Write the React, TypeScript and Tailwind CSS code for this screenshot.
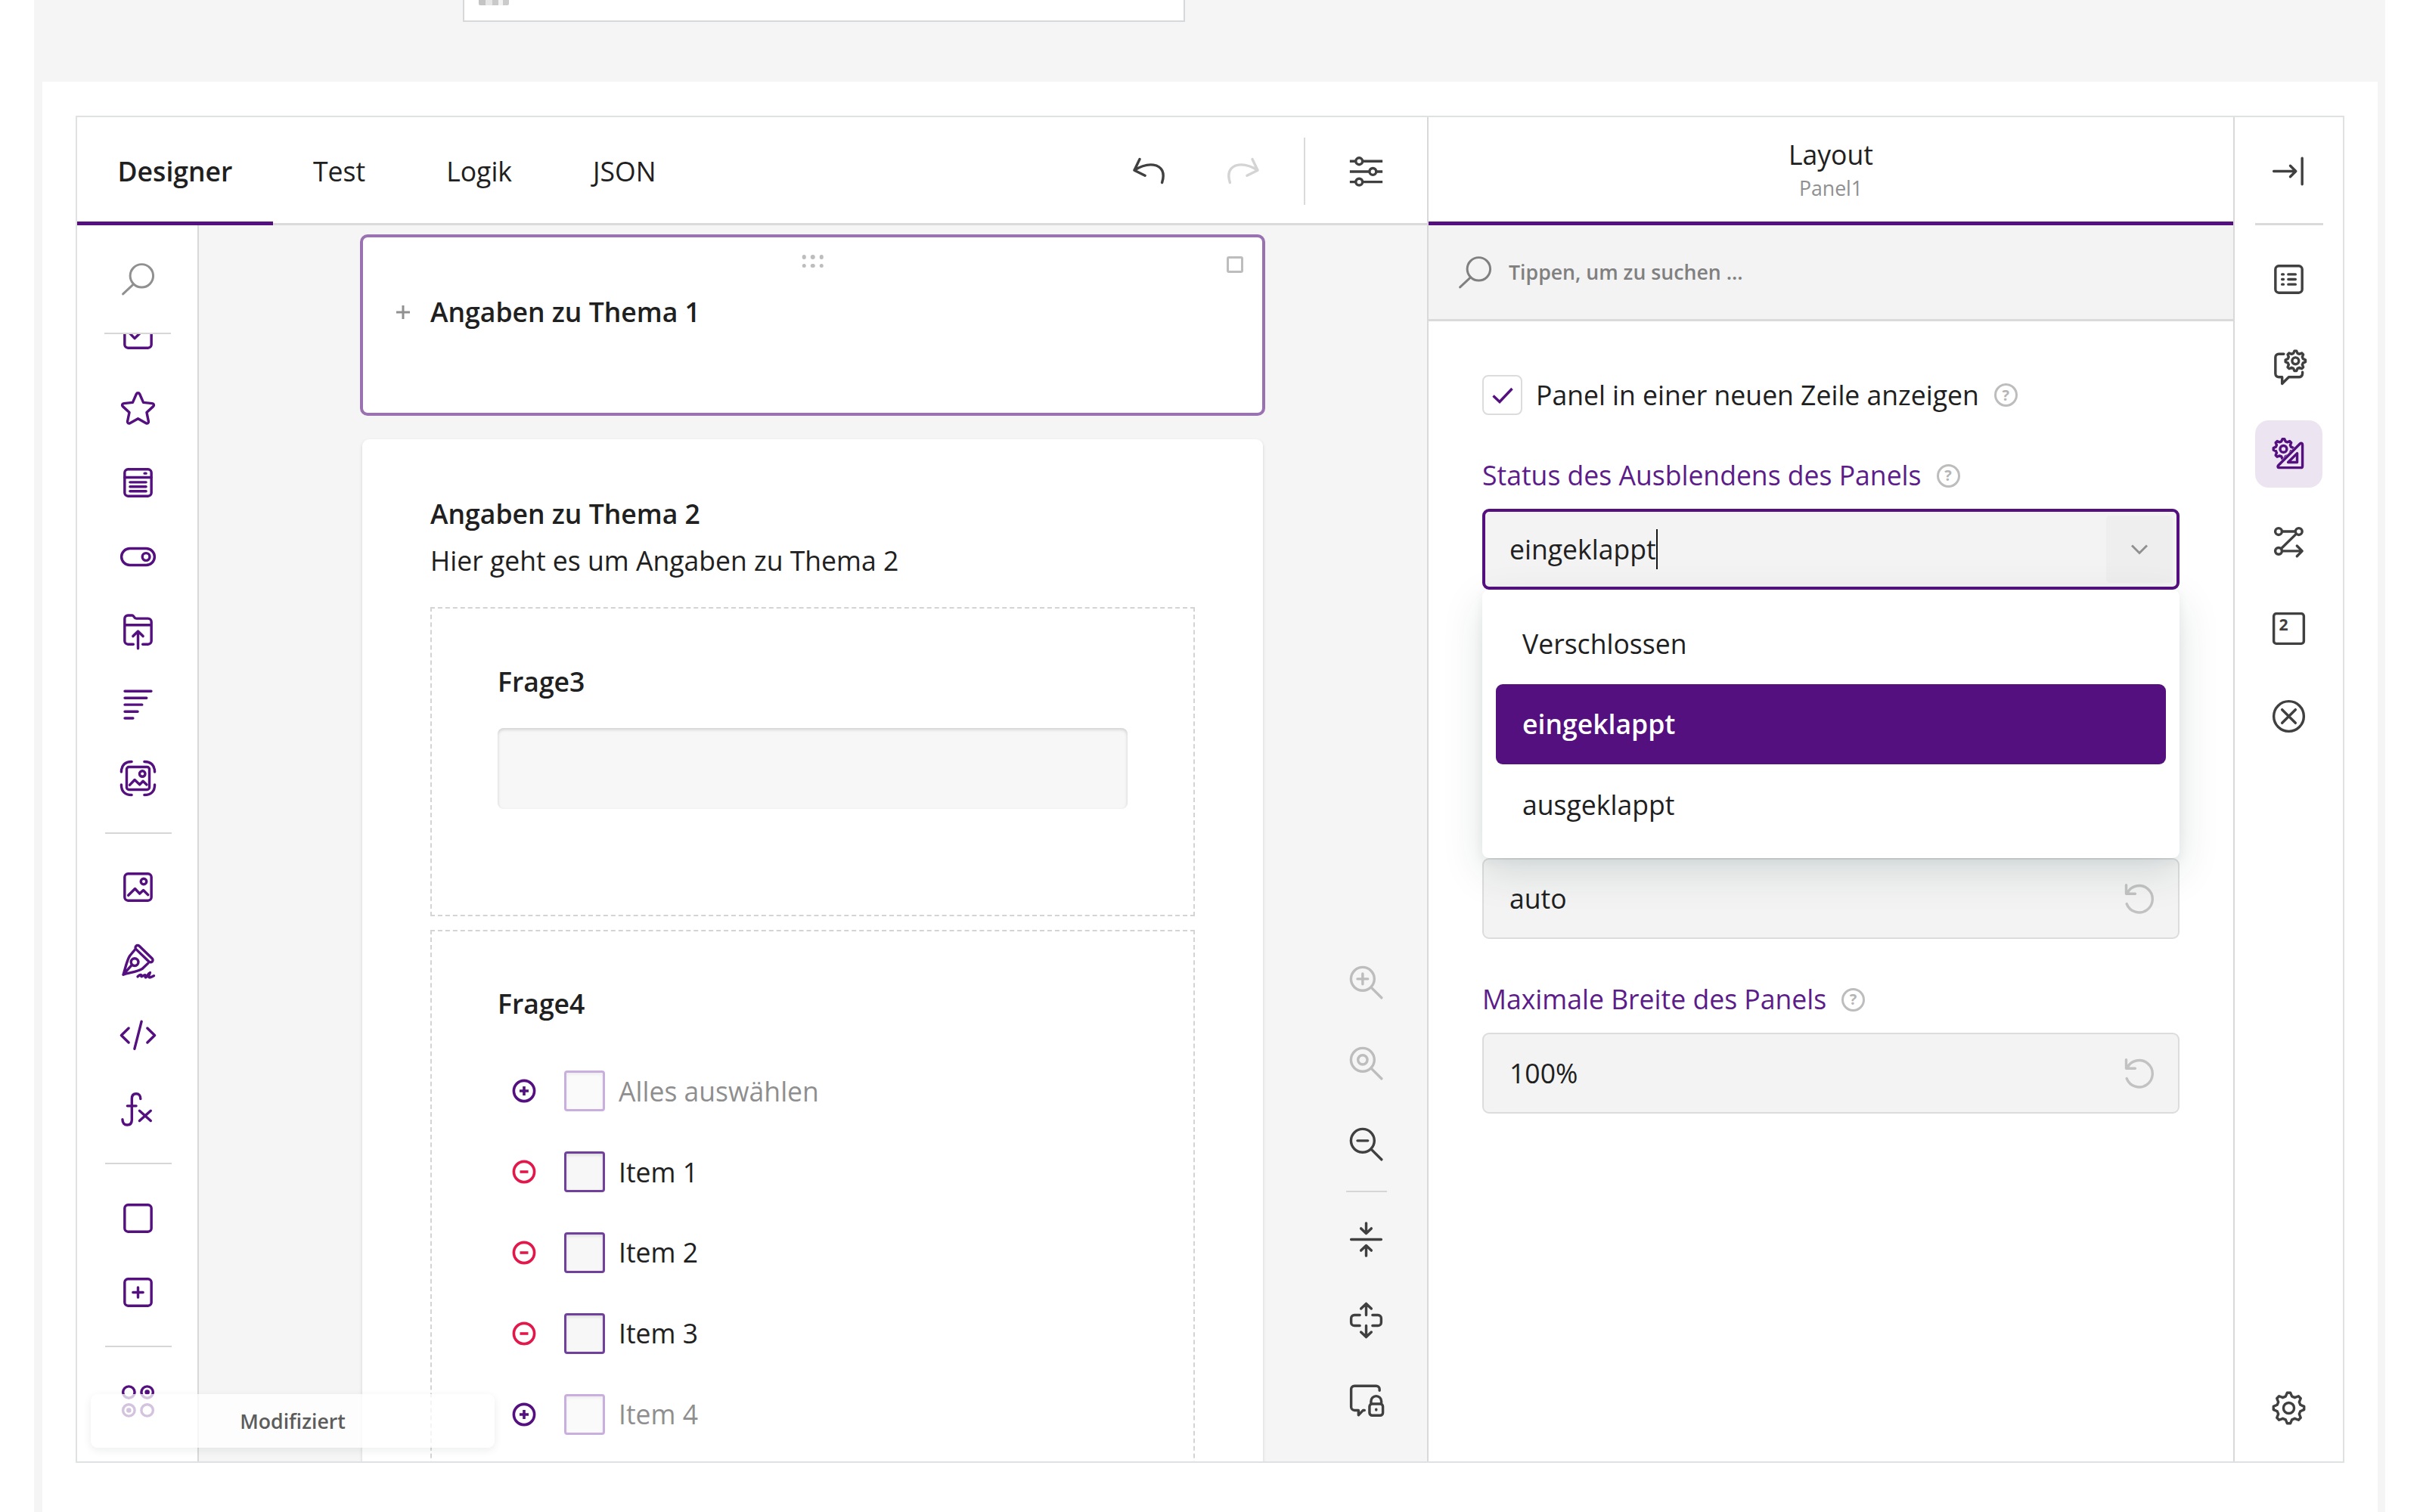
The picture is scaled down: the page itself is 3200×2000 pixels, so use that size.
import type { ReactNode } from "react";
import clsx from "clsx";

type IconProps = { children: ReactNode; className?: string };

function Icon({ children, className }: IconProps) {
  return (
    <svg
      viewBox="0 0 24 24"
      className={clsx("w-[53px] h-[53px] shrink-0 overflow-visible", className)}
      fill="none"
      stroke="currentColor"
      strokeWidth="1.55"
      strokeLinecap="round"
      strokeLinejoin="round"
    >
      {children}
    </svg>
  );
}

// Cog outline with eight small teeth
function cog(cx: number, cy: number, outer: number, inner: number) {
  const points: string[] = [];
  const offsets = [-0.34, -0.13, 0.13, 0.34];
  for (let i = 0; i < 8; i++) {
    offsets.forEach((offset, k) => {
      const radius = k === 1 || k === 2 ? outer : inner;
      const angle = ((i + offset) * Math.PI) / 4 - Math.PI / 2;
      points.push(`${(cx + radius * Math.cos(angle)).toFixed(2)} ${(cy + radius * Math.sin(angle)).toFixed(2)}`);
    });
  }
  return `M${points.join("L")}Z`;
}

const searchIcon = (
  <>
    <circle cx="14.2" cy="9.9" r="6.9" />
    <path d="M9.3 14.9L3 20.8" />
  </>
);

const choiceTools = [
  <><rect x="4" y="4" width="16" height="16" rx="2" /><path d="M7.2 11.4L10 14.3L15.8 8.6" /></>,
  <path d="M12 2.6C12.5 2.6 12.8 2.9 13 3.3L15.2 8.3L20.5 8.9C21.5 9 21.8 10 21.1 10.7L17.2 14.3L18.3 19.6C18.5 20.6 17.7 21.2 16.8 20.7L12 18L7.2 20.7C6.3 21.2 5.5 20.6 5.7 19.6L6.8 14.3L2.9 10.7C2.2 10 2.5 9 3.5 8.9L8.8 8.3L11 3.3C11.2 2.9 11.5 2.6 12 2.6Z" />,
  <><rect x="4" y="4" width="16" height="16" rx="2" /><path d="M4 8.8H20M15.9 6.4H16.8M7.2 11.7H16.8M7.2 14.4H16.8M7.2 17.1H16.8" /></>,
  <><rect x="2.1" y="7" width="19.8" height="10" rx="5" /><circle cx="16.8" cy="12" r="2.2" /></>,
  <><path d="M9.2 20H6A2 2 0 0 1 4 18V4.7A2 2 0 0 1 6 2.7H8.6C9.6 2.7 9.6 4.6 11 4.6H18A2 2 0 0 1 20 6.6V18A2 2 0 0 1 18 20H14.8M4 8.5H20" /><path d="M12 22.5V12.2M9 15.2L12 12.2L15 15.2" /></>,
  <path d="M4.1 4.2H19.9M4.1 8.3H17.1M4.1 12.3H14.4M4.1 16.4H11.8M4.1 20.4H9" />,
  <>
    <path d="M2 8.2C2 4.2 4.2 2 8.2 2M15.8 2C19.8 2 22 4.2 22 8.2M22 15.8C22 19.8 19.8 22 15.8 22M8.2 22C4.2 22 2 19.8 2 15.8" />
    <rect x="5.2" y="5.2" width="13.6" height="13.6" rx="1.4" />
    <circle cx="14.6" cy="9.3" r="1.7" />
    <path d="M7 16L10 12.9L13 15.8L15 13.7L17.2 15.8" />
  </>,
];

const contentTools = [
  <><rect x="4" y="4" width="16" height="16" rx="2" /><circle cx="15.4" cy="8.6" r="1.7" /><path d="M6.2 16.9L10.2 12.9L13 15.9L15.2 13.8L18 16.6" /></>,
  <>
    <rect x="8.9" y="6.2" width="13.4" height="2.7" rx="1.35" transform="rotate(44 15.6 7.6)" />
    <path d="M10.1 5.1L7.2 8.6C5.4 11 4.5 16 3.2 20C7 18.8 12 18.2 14.4 16.6L17.9 13.3M3.2 20L8.4 14.1" />
    <circle cx="10" cy="12.5" r="2.2" />
    <path d="M11.8 21.2C13.2 19.9 14.2 19.7 13.9 21C14 21.7 15.8 20 16.4 20.3C16.8 20.6 16 21.6 16.6 21.7C17.4 21.5 17.9 19.2 19.2 18.8C18.8 20 17.9 21.6 18.9 21.7C19.8 21.7 20.6 21.1 21.5 20.7" />
  </>,
  <path d="M6.4 7.7L2 12L6.4 16.3M17.6 7.7L22 12L17.6 16.3M14.1 3.7L9.9 20.1" />,
  <path d="M13.5 5.7C13.5 3.7 12.6 2.6 10.9 2.6C9.2 2.6 8.3 3.8 8.3 5.6V18.2C8.3 20.1 7.3 21.3 5.5 21.3C3.7 21.3 2.7 20 2.7 18M5.6 9.9H10.9M12.9 12.8L19.6 18.8M19.6 12.8L12.9 18.8" />,
];

const panelTools = [
  <rect x="4" y="4" width="16" height="16" rx="2" />,
  <><rect x="4" y="4" width="16" height="16" rx="2" /><path d="M12 9V15M9 12H15" /></>,
];

const matrixTool = (
  <>
    <circle cx="6.5" cy="6.6" r="3.5" />
    <circle cx="17.5" cy="6.6" r="3.5" />
    <circle cx="6.5" cy="17.4" r="3.5" />
    <circle cx="17.5" cy="17.4" r="3.5" />
    <circle cx="17.5" cy="6.6" r="0.7" fill="currentColor" />
    <circle cx="6.5" cy="17.4" r="0.7" fill="currentColor" />
  </>
);

const lens = (
  <>
    <circle cx="9.9" cy="9.9" r="7" />
    <path d="M15 15L21.2 21.2" />
  </>
);

const zoomTools = [
  { faded: true, icon: <>{lens}<path d="M9.9 6.8V13M6.8 9.9H13" /></> },
  { faded: true, icon: <>{lens}<circle cx="9.9" cy="9.9" r="2.8" /></> },
  { faded: false, icon: <>{lens}<path d="M6.8 9.9H13" /></> },
];

const viewTools = [
  <path d="M3 12H21M12 2.2V8.4M8.9 5.4L12 8.4L15.1 5.4M12 21.8V15.6M8.9 18.6L12 15.6L15.1 18.6" />,
  <path d="M12 8.8V2M8.9 5L12 2L15.1 5M12 15.2V22M8.9 19L12 22L15.1 19M8.2 8.8H5A2 2 0 0 0 3 10.8V13.2A2 2 0 0 0 5 15.2H8.2M15.8 8.8H19A2 2 0 0 1 21 10.8V13.2A2 2 0 0 1 19 15.2H15.8" />,
  <>
    <path d="M20 5.6V4.8A2 2 0 0 0 18 2.8H5A2 2 0 0 0 3 4.8V15.4A2 2 0 0 0 5 17.4H7.4V20.3L10.2 17.4H11" />
    <rect x="14" y="13.6" width="8" height="6.9" rx="1.6" />
    <path d="M14.9 13.4V12A3.1 3.1 0 0 1 21.1 12V13.4M18 16.8V17.2" />
  </>,
];

const railTools = [
  { active: false, icon: <><rect x="4" y="4" width="16" height="16" rx="2" /><path d="M8 9H8.8M8 12H8.8M8 15H8.8M11.7 9H16M11.7 12H16M11.7 15H16" /></> },
  {
    active: false,
    icon: (
      <>
        <path d="M9 4.2H6A2 2 0 0 0 4 6.2V16A2 2 0 0 0 6 18H8V22L12 18H18A2 2 0 0 0 20.2 16V15" />
        <path d={cog(16, 8.3, 6, 4.7)} />
        <circle cx="16" cy="8.3" r="2" />
      </>
    ),
  },
  {
    active: true,
    icon: (
      <>
        <path d={cog(8.8, 9, 6, 4.7)} />
        <circle cx="8.8" cy="9" r="2" />
        <path d="M5.9 20.2L20 6.1V20.2Z" fill="#ede4f2" stroke="#ede4f2" strokeWidth="4" />
        <path d="M6.2 20.2C5.4 20.2 5.2 19.4 5.7 18.9L18.8 5.8C19.4 5.2 20.2 5.6 20.2 6.4V19.2A1 1 0 0 1 19.2 20.2Z" />
        <path d="M11.6 17L17 11.6V17Z" />
      </>
    ),
  },
  {
    active: false,
    icon: (
      <>
        <circle cx="5.9" cy="5.9" r="2" />
        <circle cx="18" cy="5.9" r="2" />
        <circle cx="5.9" cy="17.6" r="2" />
        <path d="M7.9 5.9H16M16.5 7.3L7.4 16.2M7.9 17.6H20M16.9 14.5L20 17.6L16.9 20.7" />
      </>
    ),
  },
  {
    active: false,
    icon: (
      <>
        <rect x="3" y="3" width="18" height="18" rx="1.5" />
        <text x="6.1" y="13" fontSize="9.6" fontWeight="700" fill="currentColor" stroke="none">2</text>
      </>
    ),
  },
  { active: false, icon: <><circle cx="12" cy="12" r="9" /><path d="M8 8L16 16M16 8L8 16" /></> },
];

const items = [
  { label: "Alles auswählen", added: false },
  { label: "Item 1", added: true },
  { label: "Item 2", added: true },
  { label: "Item 3", added: true },
  { label: "Item 4", added: false },
];

const options = ["Verschlossen", "eingeklappt", "ausgeklappt"];

function ToolGroup({ tools }: { tools: ReactNode[] }) {
  return (
    <>
      {tools.map((tool, i) => (
        <div key={i} className="h-[97.8px] shrink-0 flex items-center justify-center">
          <Icon>{tool}</Icon>
        </div>
      ))}
    </>
  );
}

function ToolSeparator() {
  return (
    <div className="h-[46.3px] shrink-0 flex items-center justify-center">
      <div className="w-[88px] h-[2px] bg-[#d6d6d6]" />
    </div>
  );
}

function Help() {
  return (
    <span className="w-[31px] h-[31px] rounded-full border-[3px] border-[#bdbdbd] text-[#b5b5b5] text-[20px] leading-none font-bold flex items-center justify-center shrink-0">
      ?
    </span>
  );
}

function Toolbox() {
  return (
    <div className="w-[161px] shrink-0 flex flex-col bg-white border-r-2 border-[#d9d9d9] text-[#54107f]">
      <div className="w-[88px] h-[144px] ml-[36px] shrink-0 flex items-center justify-center border-b-2 border-[#d6d6d6] text-[#909090]">
        <Icon className="stroke-[1.35]">{searchIcon}</Icon>
      </div>
      <div className="flex-1 min-h-0 overflow-hidden">
        <div className="-mt-[48px] pl-[2px] flex flex-col">
          <ToolGroup tools={choiceTools} />
          <ToolSeparator />
          <ToolGroup tools={contentTools} />
          <ToolSeparator />
          <ToolGroup tools={panelTools} />
          <ToolSeparator />
          <ToolGroup tools={[matrixTool]} />
        </div>
      </div>
    </div>
  );
}

function Canvas() {
  return (
    <div className="flex-1 min-w-0 flex bg-[#f5f5f5] pl-[213px] overflow-hidden">
      <div className="w-[1197px] shrink-0 pt-3 flex flex-col">
        {/* Selected, collapsed panel */}
        <div className="h-[240px] shrink-0 rounded-[10px] border-[4.5px] border-[#9a72b1] bg-white relative pl-[44px] pt-[75px]">
          <div className="absolute top-[23px] left-1/2 -translate-x-1/2 grid grid-cols-3 gap-x-[6px] gap-y-[6px]">
            {[0, 1, 2, 3, 4, 5].map((dot) => (
              <span key={dot} className="w-[5.5px] h-[5.5px] rounded-full bg-[#bdbdbd]" />
            ))}
          </div>
          <div className="absolute top-[25px] right-[25px] w-[22px] h-[22px] rounded-[3px] border-[3px] border-[#bdbdbd]" />
          <div className="flex items-center h-[48px]">
            <svg viewBox="0 0 18 18" className="w-[18px] h-[18px] mr-[27px]" stroke="#909090" strokeWidth="3">
              <path d="M9 0V18M0 9H18" />
            </svg>
            <span className="font-semibold">Angaben zu Thema 1</span>
          </div>
        </div>

        <div className="mt-[31px] mx-[3px] h-[1500px] shrink-0 rounded-[9px] bg-white shadow-[0_2px_4px_rgba(0,0,0,0.15)] px-[90px] pt-[74px]">
          <div className="h-[48px] leading-[48px] font-semibold">Angaben zu Thema 2</div>
          <div className="mt-[14px] h-[48px] leading-[48px]">Hier geht es um Angaben zu Thema 2</div>

          <div className="mt-[38px] h-[409px] border-[2.5px] border-dashed border-[#d4d4d4] px-[87px] pt-[72px]">
            <div className="h-[48px] leading-[48px] font-semibold">Frage3</div>
            <div className="mt-[38px] h-[107px] rounded-[8px] bg-[#f7f7f7] shadow-[inset_0_2px_4px_rgba(0,0,0,0.17)]" />
          </div>

          <div className="mt-[18px] h-[1000px] border-[2.5px] border-dashed border-[#d4d4d4] px-[87px] pt-[71px]">
            <div className="h-[48px] leading-[48px] font-semibold">Frage4</div>
            <div className="mt-[39px]">
              {items.map((item) => (
                <div key={item.label} className="h-[106.8px] flex items-center pl-[19px]">
                  <svg
                    viewBox="0 0 32 32"
                    className={clsx("w-[32px] h-[32px]", item.added ? "text-[#e2174a]" : "text-[#54107f]")}
                    fill="none"
                    stroke="currentColor"
                    strokeWidth="3.6"
                  >
                    <circle cx="16" cy="16" r="13.6" />
                    <path d={item.added ? "M10.5 16H21.5" : "M10 16H22M16 10V22"} />
                  </svg>
                  <div className={clsx("flex items-center ml-[37px]", !item.added && "opacity-50")}>
                    <span
                      className={clsx(
                        "w-[54px] h-[54px] rounded-[4px] border-[3px] bg-[#f7f7f7] shadow-[inset_0_2px_4px_rgba(0,0,0,0.12)]",
                        item.added ? "border-[#70409a]" : "border-[#9462bd]",
                      )}
                    />
                    <span className="ml-[18px]">{item.label}</span>
                  </div>
                </div>
              ))}
            </div>
          </div>
        </div>
      </div>

      <div className="ml-[80px] w-[107px] flex flex-col justify-end items-center pb-[26px] text-[#404040]">
        {zoomTools.map((tool, i) => (
          <div key={i} className={clsx("h-[107px] flex items-center", tool.faded && "opacity-30")}>
            <Icon>{tool.icon}</Icon>
          </div>
        ))}
        <div className="h-[19px]">
          <div className="w-[54px] h-[2px] mt-2 bg-[#d6d6d6]" />
        </div>
        {viewTools.map((tool, i) => (
          <div key={i} className="h-[107px] flex items-center">
            <Icon>{tool}</Icon>
          </div>
        ))}
      </div>
    </div>
  );
}

function ResetField({ value }: { value: string }) {
  return (
    <div className="h-[107px] rounded-[9px] border-2 border-[#dcdcdc] bg-[#f3f3f3] pl-[34px] pr-[25px] flex items-center justify-between">
      <span>{value}</span>
      <Icon className="text-[#c2c2c2] -mt-[1px]">
        <path d="M4.3 4V9.2H9.7M4.8 9A8 8 0 1 1 4.6 15.2" />
      </Icon>
    </div>
  );
}

function PropertyPanel() {
  return (
    <div className="w-[1066px] shrink-0 border-l-2 border-[#d9d9d9] flex flex-col">
      <div className="h-[143px] shrink-0 border-b-[5px] border-[#54107f] flex flex-col items-center pt-[25px]">
        <div className="h-[48px] leading-[48px]">Layout</div>
        <div className="h-[40px] leading-[42px] text-[26.7px] text-[#909090]">Panel1</div>
      </div>
      <div className="h-[127px] shrink-0 bg-[#f3f3f3] border-b-[3px] border-[#dadada] flex items-center pl-[35px] text-[#808080]">
        <Icon className="stroke-[1.35]">{searchIcon}</Icon>
        <span className="ml-[18px] text-[26.7px] font-semibold">Tippen, um zu suchen ...</span>
      </div>

      <div className="px-[71px] pt-[71px]">
        <div className="h-[53px] flex items-center">
          <div className="w-[53px] h-[53px] rounded-[8px] border-2 border-[#dcdcdc] flex items-center justify-center">
            <svg viewBox="0 0 28 22" className="w-[28px] h-[22px]" fill="none" stroke="#54107f" strokeWidth="3.4">
              <path d="M1.5 11.5L10 19.5L26.5 2" />
            </svg>
          </div>
          <span className="ml-[18px] mr-[20px]">Panel in einer neuen Zeile anzeigen</span>
          <Help />
        </div>

        <div className="mt-[56px] h-[48px] flex items-center text-[#5c1c89]">
          <span className="mr-[20px]">Status des Ausblendens des Panels</span>
          <Help />
        </div>
        <div className="relative mt-[20px]">
          <div className="h-[107px] rounded-[9px] border-[4.5px] border-[#54107f] bg-[#f3f3f3] pl-[32px] pr-[5px] flex items-center justify-between">
            <span className="-mr-[2px] border-r-2 border-[#161616]">eingeklappt</span>
            <span className="w-[88px] h-[89px] rounded-[5px] bg-[#eeeeee] flex items-center justify-center">
              <svg viewBox="0 0 22 14" className="w-[22px] h-[14px]" fill="none" stroke="#909090" strokeWidth="3">
                <path d="M1 1.5L11 11.5L21 1.5" />
              </svg>
            </span>
          </div>
          <div className="absolute z-10 top-[107px] left-0 right-0 h-[355px] rounded-[9px] bg-white p-[18px] shadow-[0_18px_54px_rgba(0,50,50,0.13),0_4px_14px_rgba(0,50,50,0.06)]">
            {options.map((option) => (
              <div
                key={option}
                className={clsx(
                  "h-[106.5px] rounded-[9px] pl-[35px] flex items-center",
                  option === "eingeklappt" && "bg-[#54107f] text-white font-semibold",
                )}
              >
                {option}
              </div>
            ))}
          </div>
        </div>

        <div className="mt-[355px]">
          <ResetField value="auto" />
        </div>
        <div className="mt-[56px] mb-[20px] h-[48px] flex items-center text-[#5c1c89]">
          <span className="mr-[20px]">Maximale Breite des Panels</span>
          <Help />
        </div>
        <ResetField value="100%" />
      </div>
    </div>
  );
}

function Rail() {
  return (
    <div className="flex-1 border-l-2 border-[#d9d9d9] flex flex-col items-center text-[#404040]">
      <div className="w-[90px] h-[143px] pt-[2px] border-b-[3px] border-[#dadada] flex items-center justify-center">
        <Icon>
          <path d="M3 12H16.2M12.9 8.7L16.2 12L12.9 15.3M20 4.2V19.8" />
        </Icon>
      </div>
      <div className="mt-[27px] flex flex-col gap-[26.6px]">
        {railTools.map((tool, i) => (
          <div
            key={i}
            className={clsx(
              "w-[89px] h-[89px] rounded-[18px] flex items-center justify-center",
              tool.active && "bg-[#ede4f2] text-[#54107f]",
            )}
          >
            <Icon>{tool.icon}</Icon>
          </div>
        ))}
      </div>
      <div className="mt-auto mb-[44px]">
        <Icon>
          <path d={cog(12, 12, 9.2, 7.2)} />
          <circle cx="12" cy="12" r="3.2" />
        </Icon>
      </div>
    </div>
  );
}

export default function App() {
  return (
    <div className="w-[3200px] h-[2000px] overflow-hidden bg-white font-['Open_Sans',sans-serif] text-[35.55px] text-[#202020]">
      <div className="w-[3109px] h-full ml-[45px] pl-[11px] pr-[10px] bg-[#f5f5f5] flex flex-col">
        <div className="h-[108px] shrink-0">
          <div className="ml-[556px] w-[955px] h-[29px] bg-white border-2 border-t-0 border-[#d5d9dc] pl-[19px]">
            <div className="flex w-[40px] h-[7px] overflow-hidden rounded-b-[2px]">
              <span className="w-[9px] bg-[#c4c4c4]" />
              <span className="w-[9px] bg-[#e6e6e6]" />
              <span className="w-[8px] bg-[#c9c9c9]" />
              <span className="w-[6px] bg-[#f2f2f2]" />
              <span className="w-[8px] bg-[#cbcbcb]" />
            </div>
          </div>
        </div>

        <div className="flex-1 bg-white pt-[45px] pl-[44px]">
          <div className="relative w-[3000px] h-[1782px] border-2 border-[#dfe2e2] flex overflow-hidden">
            <div className="w-[1785px] shrink-0 flex flex-col">
              <div className="h-[143px] shrink-0 border-b-[3px] border-[#dadada] flex items-stretch">
                <div className="-mb-[3px] pt-[5px] border-b-[5px] border-[#54107f] w-[259px] flex items-center justify-center font-semibold">
                  Designer
                </div>
                <div className="px-[53px] pt-[3px] flex items-center">Test</div>
                <div className="px-[54px] pt-[3px] flex items-center">Logik</div>
                <div className="px-[53px] pt-[3px] flex items-center">JSON</div>
                <div className="ml-auto pt-[2px] flex items-center text-[#404040]">
                  <Icon className="mr-[73px]">
                    <path d="M3.6 11.4C8 8.6 12 7.8 15 8.2C20.4 9 22 13.2 20.2 18.8M6.8 4.8L3.6 11.4L10 14.6" />
                  </Icon>
                  <Icon className="text-[#d4d4d4]">
                    <path d="M20.4 11.4C16 8.6 12 7.8 9 8.2C3.6 9 2 13.2 3.8 18.8M17.2 4.8L20.4 11.4L14 14.6" />
                  </Icon>
                  <div className="ml-[53px] mr-[54px] w-[2px] h-[89px] bg-[#dadada]" />
                  <Icon className="mr-[54px]">
                    <path d="M2.2 6H21.8M2.2 12.2H21.8M2.2 18.4H21.8" strokeLinecap="butt" />
                    <circle cx="7.8" cy="6" r="2" fill="white" />
                    <circle cx="16" cy="12.2" r="2" fill="white" />
                    <circle cx="7.8" cy="18.4" r="2" fill="white" />
                  </Icon>
                </div>
              </div>
              <div className="flex-1 min-h-0 flex">
                <Toolbox />
                <Canvas />
              </div>
            </div>
            <PropertyPanel />
            <Rail />

            {/* Save status toast */}
            <div className="absolute left-[18px] bottom-[18px] w-[534px] h-[71px] rounded-[9px] bg-white/75 shadow-[0_3px_12px_rgba(0,30,30,0.08)] pt-[2px] flex items-center justify-center text-[26.7px] font-semibold text-[#5c5c5c]">
              Modifiziert
            </div>
          </div>
        </div>
      </div>
    </div>
  );
}
